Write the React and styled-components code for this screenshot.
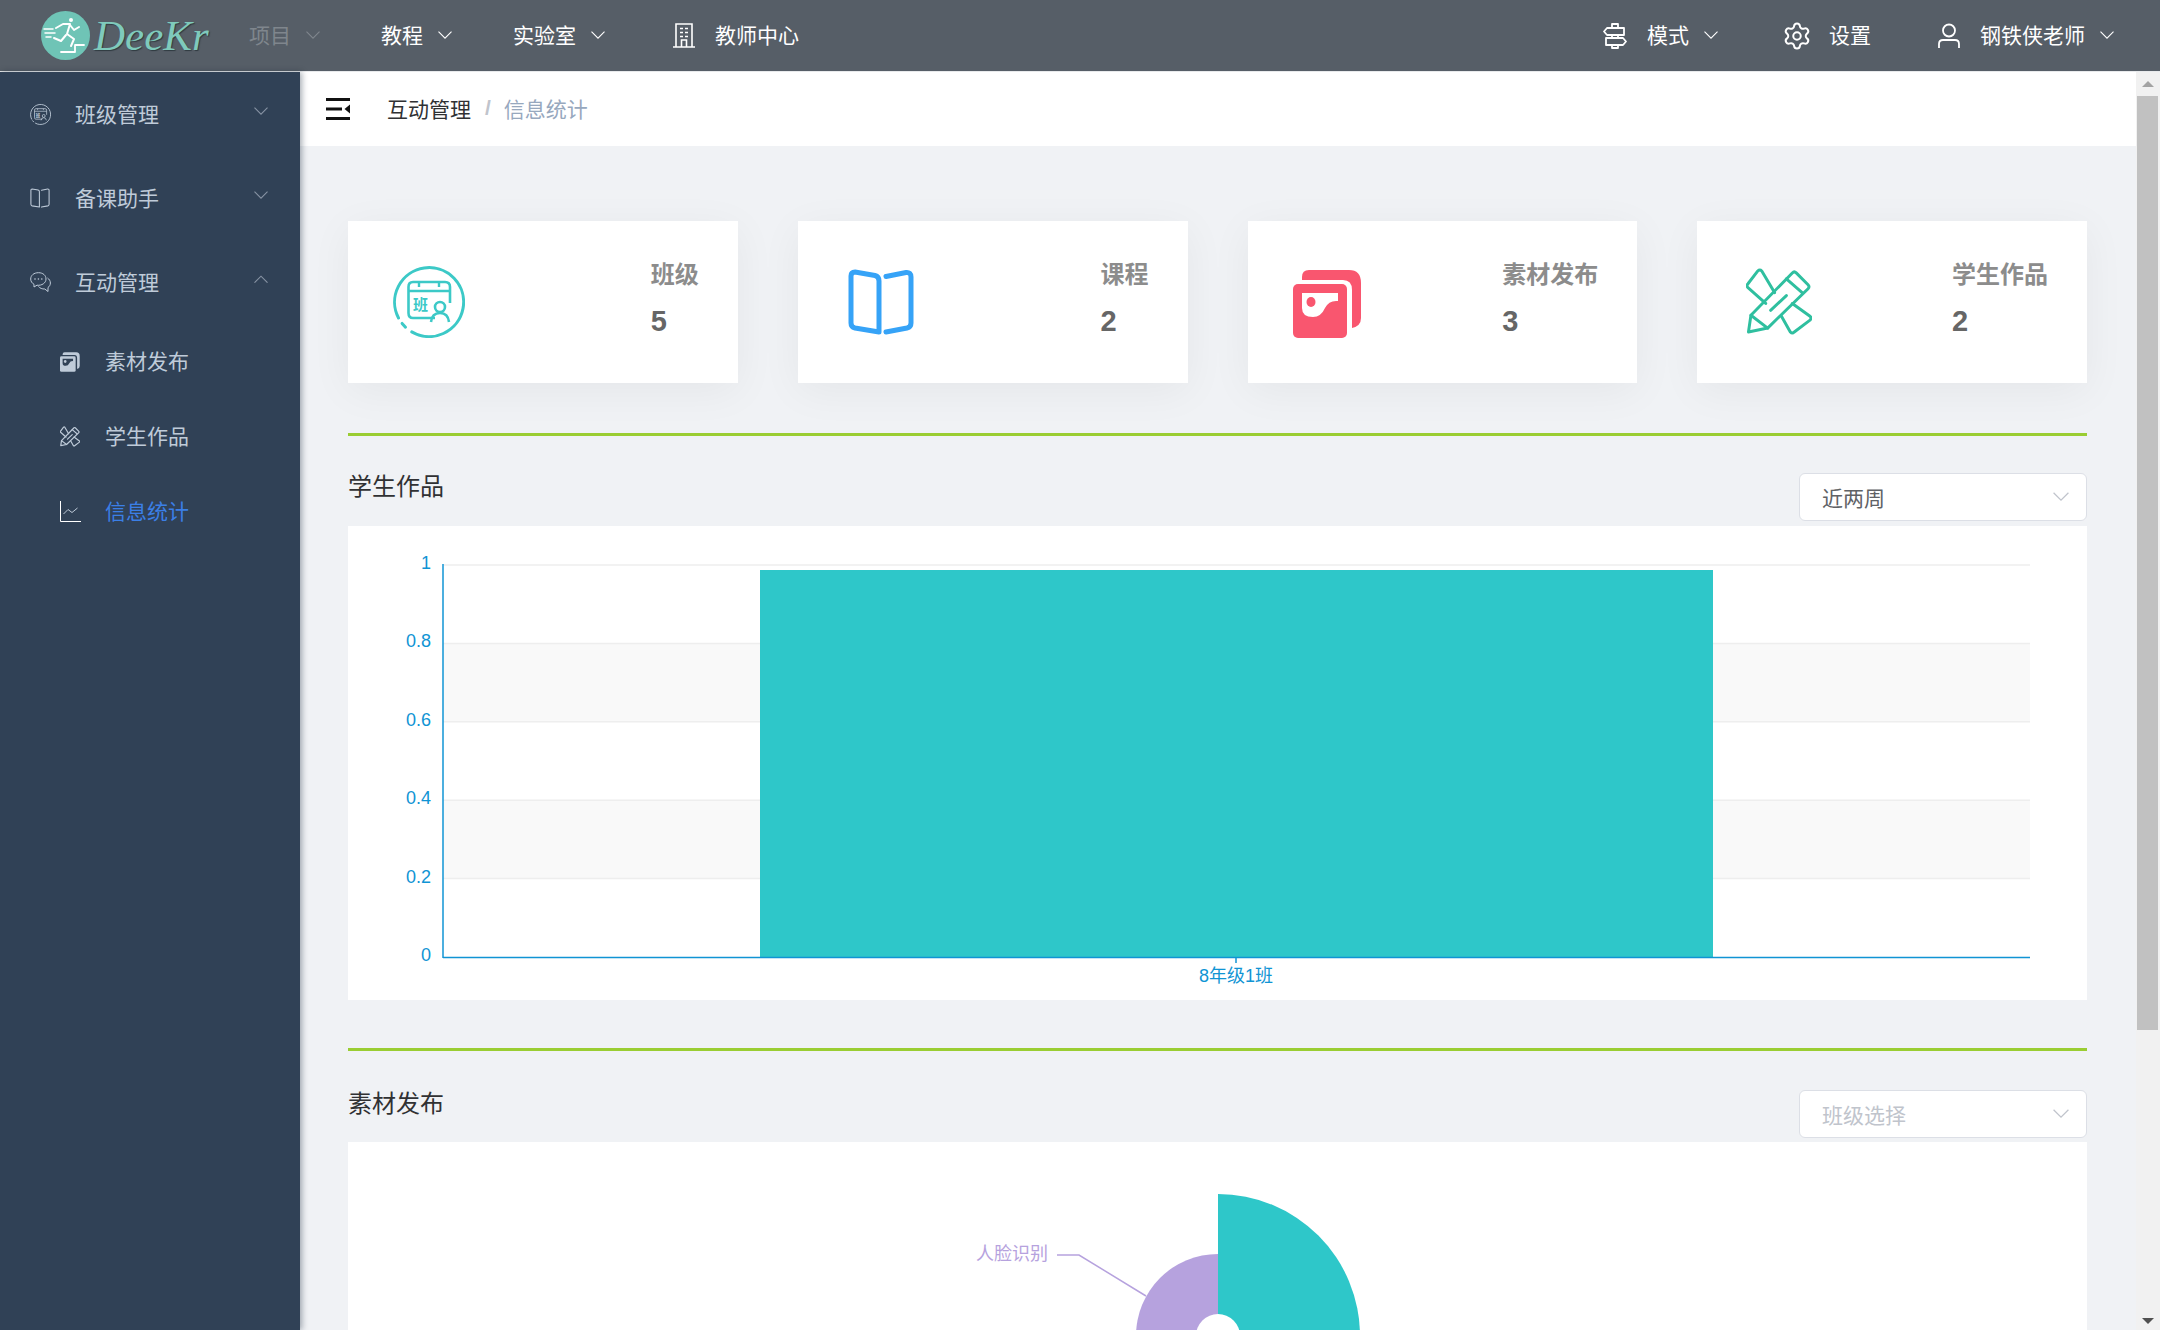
import React from 'react';
import styled, { createGlobalStyle } from 'styled-components';
import { Settings } from 'lucide-react';

const GlobalStyle = createGlobalStyle`
    html, body {
        margin: 0;
        padding: 0;
        height: 100%;
        overflow: hidden;
        background: #f0f2f5;
        font-family: "Liberation Sans", "Noto Sans CJK SC", sans-serif;
    }
`

const TEAL = '#2ec7c9';
const PURPLE = '#b6a2de';
const AXIS = '#1094d4';


// ---- icons ----

const Chevron = ({ up, size = 14, color = 'currentColor' }) => (
    <svg width={size} height={size * 0.6} viewBox="0 0 14 8" fill="none" stroke={color} strokeWidth="1.1">
        <path d={up ? 'M0.5 7.5 L7 1 L13.5 7.5' : 'M0.5 0.5 L7 7 L13.5 0.5'} />
    </svg>
);

const ClassIcon = ({ size = 72, color = '#3cc9c7' }) => (
    <svg width={size} height={size} viewBox="0 0 72 72" fill="none" stroke={color} strokeWidth="3">
        <path d="M5.5 52 A34.5 34.5 0 1 1 18.75 65.9" strokeLinecap="round" />
        <path d="M9.1 57.4 L12.5 61.2" strokeLinecap="round" />
        <path d="M15.5 47 L15.5 21 Q15.5 16 20 16 L52 16 Q57 16 57 21 L57 37" strokeWidth="2.6" />
        <path d="M15.5 25 H57 M26 16 V21 M46 16 V21" strokeWidth="2.4" />
        <path d="M15.5 47 Q15.5 52 20 52 L42 52" strokeWidth="2.6" />
        <text x="20" y="44" fontSize="15" fontWeight="700" fill={color} stroke="none">班</text>
        <circle cx="47" cy="41" r="5" strokeWidth="2.6" />
        <path d="M38 56 Q39 47 47 47 Q55 47 56 56" strokeWidth="2.6" />
    </svg>
);

const BookIcon = ({ size = 66, color = '#36a3f7', stroke = 5 }) => (
    <svg width={size} height={size} viewBox="0 0 66 66" fill="none" stroke={color} strokeWidth={stroke} strokeLinecap="round">
        <path d="M31 63 L7 59 Q3 58 3 54 V7 Q3 3 7 3 L27 6.5 Q31 7.5 31 12 Z" strokeLinejoin="round" />
        <path d="M38 7.5 L58 3.5 Q63 3 63 8 V54 Q63 58 59 59 L38 63" />
    </svg>
);

const MediaIcon = ({ size = 69, color = '#f9566f', inner = '#fff' }) => (
    <svg width={size} height={size * 73 / 69} viewBox="0 -4 69 73">
        <path d="M9 9 V7 Q9 0 16 0 L56 0 Q68 0 68 13 V48 Q68 56 59 58 L59 20 Q59 10 50 10 L9 10 Z" fill={color} />
        <rect x="0" y="14" width="54" height="54" rx="5" fill={color} />
        <path d="M9 23 H45 V31 Q36 30 32 38 Q28 47 20 47 Q9 47 9 38 Z" fill={inner} />
        <ellipse cx="18" cy="32" rx="4.5" ry="5" fill={color} />
    </svg>
);

const WorksIcon = ({ size = 66, color = '#2fbf9f', stroke = 3 }) => (
    <svg width={size} height={size * 71 / 67} viewBox="0 0 67 71" fill="none" stroke={color} strokeWidth={stroke} strokeLinejoin="round" strokeLinecap="round">
        <path d="M20 37 L2 21 Q0 19 2 17 L12 4 Q14 2 16 4 L29 26" />
        <path d="M36 50 L45 66 Q47 68 49 66 L65 54 Q67 52 65 50 L47 37" />
        <path d="M2.5 66 L5 49 L47 6 Q49 4 51 6 L63 18 Q65 20 63 22 L22 62 Z" />
        <path d="M5 49 L22 62" />
        <path d="M41 12 L57 26" />
        <path d="M25 44 L41 29" />
    </svg>
);

const ChatIcon = ({ size = 21, color = 'currentColor' }) => (
    <svg width={size} height={size} viewBox="0 0 21 21" fill="none" stroke={color} strokeWidth="1">
        <path d="M8.5 0.7 C3.8 0.7 0.7 3.4 0.7 7 C0.7 9.3 2 11.2 4 12.3 L4 15 L7 13.2 C11.8 13.8 16 11 16 7 C16 3.4 13 0.7 8.5 0.7 Z" />
        <path d="M17.5 6 C19.3 7.2 20.4 9 20.4 11 C20.4 13 19.3 14.6 18 15.5 L18 19.5 L14.8 17 C12.2 17.2 9.8 16.2 8.5 14.4" />
        <circle cx="5" cy="7" r="0.8" fill={color} stroke="none" />
        <circle cx="8.4" cy="7" r="0.8" fill={color} stroke="none" />
        <circle cx="11.8" cy="7" r="0.8" fill={color} stroke="none" />
    </svg>
);

const ChartIcon = ({ color = '#fff', line = '#bfcbd9' }) => (
    <svg width="21" height="21" viewBox="0 0 21 21" fill="none" strokeWidth="1">
        <path d="M0.5 0 V20.5 H21" stroke={color} />
        <path d="M3.5 13 L8 8.5 L12 11.5 L17.5 7" stroke={line} />
    </svg>
);

const BuildingIcon = () => (
    <svg width="22" height="25" viewBox="0 0 22 25" fill="none" stroke="#fff" strokeWidth="1.6">
        <path d="M0 24 H22 M3 24 V1 H19 V24 M8.5 24 V17 H13.5 V24" />
        <path d="M7 5.5 H10 M12 5.5 H15 M7 9.5 H10 M12 9.5 H15 M7 13.5 H10 M12 13.5 H15" />
    </svg>
);

const GuideIcon = () => (
    <svg width="24" height="26" viewBox="0 0 24 26" fill="none" stroke="#fff" strokeWidth="1.8" strokeLinejoin="round">
        <path d="M9 1 H15 V5 H9 Z M9 12 V15 M15 12 V15 M9 22 V25 H15 V22" />
        <path d="M4 5 H21 V12 H4 L1 8.5 Z" />
        <path d="M3 15 H20 L23 18.5 L20 22 H3 Z" />
    </svg>
);

const UserIcon = () => (
    <svg width="22" height="25" viewBox="0 0 22 25" fill="none" stroke="#fff" strokeWidth="1.8">
        <circle cx="11" cy="7.5" r="6" />
        <path d="M1 25 V21 Q1 17 5 17 H17 Q21 17 21 21 V25" />
    </svg>
);

const MenuIcon = () => (
    <svg width="24" height="22" viewBox="0 0 24 22" fill="#111">
        <rect y="0" width="24" height="3" />
        <rect y="9.5" width="16" height="3" />
        <rect y="19" width="24" height="3" />
        <path d="M24 6.5 V15.5 L18.5 11 Z" />
    </svg>
);

const Logo = () => (
    <LogoBox>
        <svg width="49" height="49" viewBox="0 0 49 49">
            <circle cx="24.5" cy="24.5" r="24.5" fill="#6fc4b6" />
            <g fill="none" stroke="#fff" strokeWidth="2" strokeLinecap="round" strokeLinejoin="round">
                <circle cx="30" cy="9" r="2" fill="#fff" stroke="none" />
                <path d="M15 17 L22 13 L29 13 L26 23 L33 28 L30 35" />
                <path d="M29 14 L33 19 L38 16" />
                <path d="M25 24 L20 30 L13 27" />
                <path d="M3 18 H12 M4 22 H14 M5 26 H10" strokeWidth="1.5" />
                <path d="M20 41 H34 V34 H43" strokeWidth="1.8" />
            </g>
        </svg>
        <LogoText>DeeKr</LogoText>
    </LogoBox>
);


// ---- chart data ----

const ticks = [
    { label: '1', y: 39 },
    { label: '0.8', y: 117.4 },
    { label: '0.6', y: 195.8 },
    { label: '0.4', y: 274.2 },
    { label: '0.2', y: 352.6 },
    { label: '0', y: 431 },
];

const BarChart = () => (
    <ChartSvg width="1739" height="474">
        <rect x="95" y="117.4" width="1587" height="78.4" fill="#f9f9f9" />
        <rect x="95" y="274.2" width="1587" height="78.4" fill="#f9f9f9" />
        {ticks.slice(0, 5).map((t) => (
            <line key={t.label} x1="95" x2="1682" y1={t.y} y2={t.y} stroke="#eee" strokeWidth="1.5" />
        ))}
        <rect x="412" y="44" width="953" height="387" fill={TEAL} />
        <line x1="95" x2="95" y1="38" y2="432" stroke={AXIS} strokeWidth="1.5" />
        <line x1="95" x2="1682" y1="431.5" y2="431.5" stroke={AXIS} strokeWidth="1.5" />
        <line x1="888" x2="888" y1="431" y2="437" stroke={AXIS} strokeWidth="1.5" />
        {ticks.map((t) => (
            <AxisLabel key={t.label} x="83" y={t.y + 4} textAnchor="end">{t.label}</AxisLabel>
        ))}
        <AxisLabel x="888" y="455.5" textAnchor="middle">8年级1班</AxisLabel>
    </ChartSvg>
);

const PieChart = () => (
    <ChartSvg width="1739" height="480">
        <path d="M870 194 L870 52 A142 142 0 0 1 1012 194 Z" fill={TEAL} />
        <path d="M870 194 L788 194 A82 82 0 0 1 870 112 Z" fill={PURPLE} />
        <circle cx="870" cy="194" r="22" fill="#fff" />
        <polyline points="709,113 731,113 798,154" fill="none" stroke={PURPLE} strokeWidth="1.5" />
        <PieLabel x="700" y="118" textAnchor="end">人脸识别</PieLabel>
    </ChartSvg>
);


const stats = [
    { title: '班级', value: 5, icon: <ClassIcon />, left: 45 },
    { title: '课程', value: 2, icon: <BookIcon />, left: 50 },
    { title: '素材发布', value: 3, icon: <MediaIcon />, left: 45 },
    { title: '学生作品', value: 2, icon: <WorksIcon />, left: 49 },
];


const App = () => {
    return (
        <Page>
            <GlobalStyle />

            <Header>
                <Logo />
                <NavLeft>
                    <NavItem $muted><NavLabel>项目</NavLabel><Chevron /></NavItem>
                    <NavItem><NavLabel>教程</NavLabel><Chevron /></NavItem>
                    <NavItem><NavLabel>实验室</NavLabel><Chevron /></NavItem>
                    <NavItem $wide><NavIcon><BuildingIcon /></NavIcon><NavLabel>教师中心</NavLabel></NavItem>
                </NavLeft>
                <NavRight>
                    <NavItem><NavIcon><GuideIcon /></NavIcon><NavLabel>模式</NavLabel><Chevron /></NavItem>
                    <NavItem><GearIcon size={30} strokeWidth={1.6} /><NavLabel>设置</NavLabel></NavItem>
                    <NavItem><NavIcon><UserIcon /></NavIcon><NavLabel>钢铁侠老师</NavLabel><Chevron /></NavItem>
                </NavRight>
            </Header>

            <Body>
                <Sidebar>
                    <MenuRow><IconSlot><ClassIcon size={21} color="#bfcbd9" /></IconSlot><MenuLabel>班级管理</MenuLabel><MenuArrow><Chevron /></MenuArrow></MenuRow>
                    <MenuRow><IconSlot><BookIcon size={20} color="#bfcbd9" stroke={3.5} /></IconSlot><MenuLabel>备课助手</MenuLabel><MenuArrow><Chevron /></MenuArrow></MenuRow>
                    <MenuRow><IconSlot><ChatIcon /></IconSlot><MenuLabel>互动管理</MenuLabel><MenuArrow><Chevron up /></MenuArrow></MenuRow>
                    <SubRow><IconSlot><MediaIcon size={20} color="#bfcbd9" inner="#304156" /></IconSlot><MenuLabel>素材发布</MenuLabel></SubRow>
                    <SubRow><IconSlot><WorksIcon size={20} color="#bfcbd9" stroke={4} /></IconSlot><MenuLabel>学生作品</MenuLabel></SubRow>
                    <SubRow $active><IconSlot><ChartIcon /></IconSlot><MenuLabel>信息统计</MenuLabel></SubRow>
                </Sidebar>

                <Content>
                    <Crumbs>
                        <MenuIcon />
                        <CrumbLink>互动管理</CrumbLink>
                        <CrumbSep>/</CrumbSep>
                        <CrumbCurrent>信息统计</CrumbCurrent>
                    </Crumbs>

                    <Main>
                        <CardGrid>
                            {stats.map((s) => (
                                <Card key={s.title} $left={s.left}>
                                    {s.icon}
                                    <CardText>
                                        <CardTitle>{s.title}</CardTitle>
                                        <CardValue>{s.value}</CardValue>
                                    </CardText>
                                </Card>
                            ))}
                        </CardGrid>

                        <Section $top={50} $pad={37}>
                            <SectionHead>
                                <SectionTitle>学生作品</SectionTitle>
                                <Select>近两周<Chevron size={16} color="#c0c4cc" /></Select>
                            </SectionHead>
                            <Panel $height={474} $gap={5}><BarChart /></Panel>
                        </Section>

                        <Section $top={48} $pad={39}>
                            <SectionHead>
                                <SectionTitle>素材发布</SectionTitle>
                                <Select $placeholder>班级选择<Chevron size={16} color="#c0c4cc" /></Select>
                            </SectionHead>
                            <Panel $height={480} $gap={4}><PieChart /></Panel>
                        </Section>
                    </Main>
                </Content>

                <ScrollTrack>
                    <ScrollArrow $up />
                    <ScrollThumb />
                    <ScrollArrow />
                </ScrollTrack>
            </Body>
        </Page>
    );
}

export default App;


const Page = styled.div`
    height: 100vh;
    display: flex;
    flex-direction: column;
    overflow: hidden;
`

const Header = styled.header`
    flex: none;
    height: 71px;
    display: flex;
    align-items: center;
    padding: 0 46px 0 41px;
    background: #565e67;
    border-bottom: 1px solid #e8eaec;
    color: #fff;
    font-size: 21px;
`

const LogoBox = styled.div`
    display: flex;
    align-items: center;
    gap: 4px;
    width: 208px;
    flex: none;
`

const LogoText = styled.span`
    font-family: "Liberation Serif", serif;
    font-style: italic;
    font-size: 43px;
    color: #7fcabc;
    text-shadow: 1px 1px 1px #2f3a40;
`

const NavLeft = styled.nav`
    display: flex;
    align-items: center;
    gap: 61px;
`

const NavRight = styled.nav`
    display: flex;
    align-items: center;
    gap: 67px;
    margin-left: auto;
`

const NavItem = styled.div`
    display: flex;
    align-items: center;
    gap: 15px;
    color: ${(p) => (p.$muted ? '#7f868d' : '#fff')};
    margin-left: ${(p) => (p.$wide ? '7px' : '0')};
`

const NavLabel = styled.span`
    margin-bottom: 4px;
`

const NavIcon = styled.span`
    display: flex;
    margin-right: 5px;
`

const GearIcon = styled(Settings)`
    margin: 0 2px 0 -3px;
`

const Body = styled.div`
    flex: 1;
    min-height: 0;
    display: flex;
`

const Sidebar = styled.aside`
    flex: none;
    width: 300px;
    position: relative;
    z-index: 2;
    background: #304156;
    box-shadow: 2px 0 6px rgba(0, 21, 41, 0.35);
    color: #bfcbd9;
    font-size: 21px;
`

const MenuRow = styled.div`
    height: 84px;
    display: flex;
    align-items: center;
    padding: 0 32px 0 30px;
`

const SubRow = styled.div`
    height: 75px;
    display: flex;
    align-items: center;
    padding-left: 60px;
    color: ${(p) => (p.$active ? '#3b7fe6' : '#bfcbd9')};
`

const MenuLabel = styled.span`
    margin-bottom: 3px;
`

const IconSlot = styled.span`
    width: 45px;
    flex: none;
    display: flex;
    align-items: center;
`

const MenuArrow = styled.span`
    margin-left: auto;
    display: flex;
    color: #8793a3;
    transform: translateY(-3px);
`

const Content = styled.div`
    flex: 1;
    min-width: 0;
    display: flex;
    flex-direction: column;
`

const Crumbs = styled.div`
    flex: none;
    height: 74px;
    display: flex;
    align-items: center;
    padding-left: 26px;
    background: #fff;
    font-size: 21px;
    position: relative;
    z-index: 1;
`

const CrumbLink = styled.span`
    margin: 0 0 3px 37px;
    color: #303133;
`

const CrumbSep = styled.span`
    margin: 0 13px 3px 14px;
    color: #c0c4cc;
    font-weight: 700;
`

const CrumbCurrent = styled.span`
    margin-bottom: 3px;
    color: #97a8be;
`

const Main = styled.main`
    flex: 1;
    min-height: 0;
    overflow: hidden;
    padding: 75px 49px 0 48px;
    background: #f0f2f5;
`

const CardGrid = styled.div`
    display: grid;
    grid-template-columns: repeat(4, 1fr);
    gap: 60px;
`

const Card = styled.div`
    height: 162px;
    display: flex;
    align-items: center;
    justify-content: space-between;
    padding: 0 39px 0 ${(p) => p.$left}px;
    background: #fff;
    box-shadow: 0 8px 40px rgba(0, 0, 0, 0.05);
`

const CardText = styled.div`
    display: flex;
    flex-direction: column;
    gap: 15px;
    transform: translateY(-4px);
`

const CardTitle = styled.div`
    font-size: 24px;
    line-height: 30px;
    font-weight: 700;
    color: #8c8c8c;
`

const CardValue = styled.div`
    font-size: 29px;
    line-height: 32px;
    font-weight: 700;
    color: #666;
`

const Section = styled.section`
    margin-top: ${(p) => p.$top}px;
    padding-top: ${(p) => p.$pad}px;
    border-top: 3px solid #9acd32;
`

const SectionHead = styled.div`
    display: flex;
    justify-content: space-between;
    align-items: flex-start;
`

const SectionTitle = styled.h3`
    margin: 0;
    font-size: 24px;
    line-height: 28px;
    font-weight: 400;
    color: #303133;
`

const Select = styled.div`
    box-sizing: border-box;
    width: 288px;
    height: 48px;
    display: flex;
    align-items: center;
    justify-content: space-between;
    padding: 0 17px 0 22px;
    background: #fff;
    border: 1px solid #dcdfe6;
    border-radius: 6px;
    font-size: 21px;
    color: ${(p) => (p.$placeholder ? '#c0c4cc' : '#606266')};
`

const Panel = styled.div`
    height: ${(p) => p.$height}px;
    margin-top: ${(p) => p.$gap}px;
    background: #fff;
`

const ChartSvg = styled.svg`
    display: block;
`

const AxisLabel = styled.text`
    font-size: 18px;
    fill: ${AXIS};
`

const PieLabel = styled.text`
    font-size: 18px;
    fill: ${PURPLE};
`

const ScrollTrack = styled.div`
    flex: none;
    box-sizing: border-box;
    width: 24px;
    padding-left: 1px;
    display: flex;
    flex-direction: column;
    align-items: flex-start;
    background: #f1f1f1;
    position: relative;
    z-index: 1;
`

const ScrollThumb = styled.div`
    width: 21px;
    height: 934px;
    background: #c1c1c1;
`

const ScrollArrow = styled.div`
    width: 0;
    height: 0;
    margin: ${(p) => (p.$up ? '9px 0 9px 5px' : 'auto 0 6px 5px')};
    border-left: 6px solid transparent;
    border-right: 6px solid transparent;
    ${(p) => (p.$up ? 'border-bottom: 6px solid #a3a3a3;' : 'border-top: 6px solid #505050;')}
`
